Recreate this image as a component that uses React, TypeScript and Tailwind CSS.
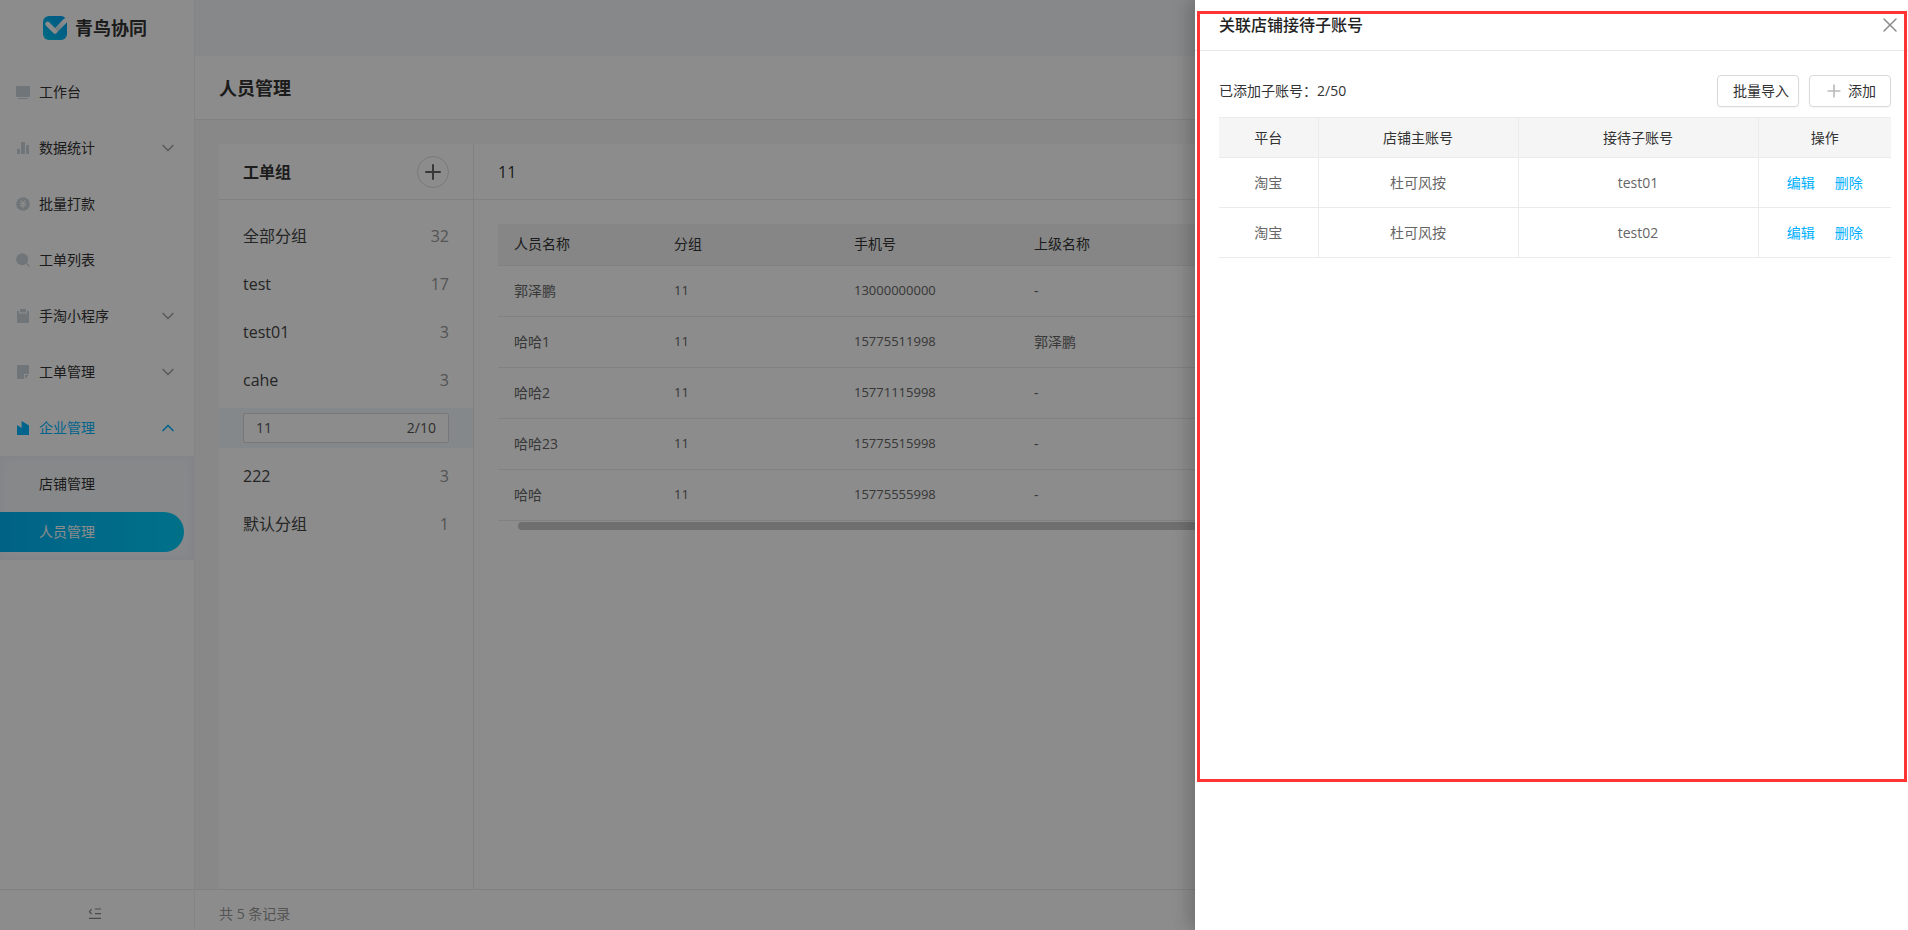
import { useState } from "react";
import clsx from "clsx";
import { ChevronDown, ChevronUp, Plus, X } from "lucide-react";

type IconProps = { name: string };

function MenuIcon({ name }: IconProps) {
    return (
        <svg viewBox="0 0 14 14" className="h-3.5 w-3.5" fill="currentColor">
            {name === "workbench" && (
                <>
                    <rect x="0" y="1" width="14" height="11" rx="1" />
                    <rect x="2" y="13" width="10" height="1" />
                </>
            )}
            {name === "stats" && (
                <>
                    <rect x="1" y="8" width="3" height="5" />
                    <rect x="5" y="1" width="4" height="12" />
                    <rect x="10" y="4" width="3" height="9" />
                </>
            )}
            {name === "pay" && (
                <>
                    <circle cx="7" cy="7" r="6.8" />
                    <path
                        d="M4.6 3.4 7 6.2l2.4-2.8M4.2 6.6h5.6M4.2 8.6h5.6M7 6.2V11"
                        fill="none"
                        stroke="#fff"
                        strokeWidth="1.1"
                    />
                </>
            )}
            {name === "search" && (
                <>
                    <circle cx="6.2" cy="6.2" r="6" />
                    <path
                        d="m10.5 10.5 3 3"
                        stroke="currentColor"
                        strokeWidth="1.2"
                    />
                </>
            )}
            {name === "clipboard" && (
                <>
                    <path d="M1 2h2v2.6h8V2h2v11.2a.8.8 0 0 1-.8.8H1.8a.8.8 0 0 1-.8-.8z" />
                    <rect x="4" y="0" width="6" height="3.4" />
                </>
            )}
            {name === "note" && (
                <>
                    <path d="M1.8 0h10.4a.8.8 0 0 1 .8.8V9H8v5H1.8a.8.8 0 0 1-.8-.8V.8A.8.8 0 0 1 1.8 0z" />
                    <path d="M9 14v-4h4z" />
                </>
            )}
            {name === "company" && (
                <path d="M1 14V4l4.6 3V0L13 4.4V14z" />
            )}
        </svg>
    );
}

const menus = [
    { label: "工作台", icon: "workbench", arrow: false },
    { label: "数据统计", icon: "stats", arrow: true },
    { label: "批量打款", icon: "pay", arrow: false },
    { label: "工单列表", icon: "search", arrow: false },
    { label: "手淘小程序", icon: "clipboard", arrow: true },
    { label: "工单管理", icon: "note", arrow: true },
];

const groups = [
    { name: "全部分组", count: 32 },
    { name: "test", count: 17 },
    { name: "test01", count: 3 },
    { name: "cahe", count: 3 },
    { name: "11", count: 5, editing: true },
    { name: "222", count: 3 },
    { name: "默认分组", count: 1 },
];

const people = [
    { name: "郭泽鹏", group: "11", phone: "13000000000", leader: "-" },
    { name: "哈哈1", group: "11", phone: "15775511998", leader: "郭泽鹏" },
    { name: "哈哈2", group: "11", phone: "15771115998", leader: "-" },
    { name: "哈哈23", group: "11", phone: "15775515998", leader: "-" },
    { name: "哈哈", group: "11", phone: "15775555998", leader: "-" },
];

const accounts = [
    { platform: "淘宝", main: "杜可风按", sub: "test01" },
    { platform: "淘宝", main: "杜可风按", sub: "test02" },
];

function Logo() {
    return (
        <svg viewBox="0 0 24 24" className="h-6 w-6">
            <defs>
                <linearGradient id="logo-bg" x1="0" y1="1" x2="1" y2="0">
                    <stop offset="0" stopColor="#00c4f0" />
                    <stop offset="1" stopColor="#00a2f2" />
                </linearGradient>
                <linearGradient
                    id="logo-arm"
                    gradientUnits="userSpaceOnUse"
                    x1="12"
                    y1="15"
                    x2="20"
                    y2="6"
                >
                    <stop offset="0" stopColor="#b9dcea" />
                    <stop offset="1" stopColor="#fff" />
                </linearGradient>
            </defs>
            <rect width="24" height="24" rx="6" fill="url(#logo-bg)" />
            <g
                fill="none"
                strokeWidth="4.6"
                strokeLinecap="round"
                strokeLinejoin="round"
            >
                <path d="M12 15.4 22.6 4.4" stroke="url(#logo-arm)" />
                <path d="M4.6 8 12 15.4" stroke="#fff" />
            </g>
        </svg>
    );
}

function Sidebar() {
    return (
        <aside className="flex w-[195px] shrink-0 flex-col border-r border-[#f0f0f0] bg-white">
            <div className="flex h-14 items-center gap-2 pl-[43px]">
                <Logo />
                <span className="text-lg font-bold text-[#333]">青鸟协同</span>
            </div>
            <nav className="flex-1 pt-2">
                {menus.map((m) => (
                    <a
                        key={m.label}
                        href="#"
                        className="flex h-14 items-center px-4 text-sm text-[#333]"
                    >
                        <span className="mr-[9px] text-[#ccd6dc]">
                            <MenuIcon name={m.icon} />
                        </span>
                        {m.label}
                        {m.arrow && (
                            <ChevronDown className="ml-auto h-5 w-5 text-[#aaa]" />
                        )}
                    </a>
                ))}
                <a
                    href="#"
                    className="flex h-14 items-center px-4 text-sm text-[#00b7ff]"
                >
                    <span className="mr-[9px]">
                        <MenuIcon name="company" />
                    </span>
                    企业管理
                    <ChevronUp className="ml-auto h-5 w-5" />
                </a>
                <div className="space-y-2 bg-[#f5f7fa] py-2 text-sm shadow-[inset_0_0_8px_rgba(0,80,140,0.06)]">
                    <a
                        href="#"
                        className="flex h-10 items-center pl-[39px] text-[#333]"
                    >
                        店铺管理
                    </a>
                    <a
                        href="#"
                        className="mr-2.5 flex h-10 items-center rounded-r-full bg-gradient-to-r from-[#00b4f5] to-[#00cdfa] pl-[39px] text-white"
                    >
                        人员管理
                    </a>
                </div>
            </nav>
            <div className="flex h-[41px] items-center justify-center border-t border-[#ebebeb] pt-2 pr-1">
                <button type="button" aria-label="收起菜单">
                    <svg
                        viewBox="0 0 14 12"
                        className="h-3 w-3.5"
                        fill="none"
                        stroke="#888"
                        strokeWidth="1.2"
                    >
                        <path d="M7 1h6M7 5.7h6M1 10.4h12M3.6 1.2 1.4 3.7l2.2 2.5" />
                    </svg>
                </button>
            </div>
        </aside>
    );
}

function GroupPanel() {
    const [groupName, setGroupName] = useState("11");

    return (
        <section className="w-[255px] shrink-0 border-r border-[#ebebeb] bg-white">
            <div className="flex h-14 items-center justify-between border-b border-[#ebebeb] px-6">
                <h2 className="text-base font-bold text-[#333]">工单组</h2>
                <button
                    type="button"
                    aria-label="新增分组"
                    className="flex h-8 w-8 items-center justify-center rounded-full border border-[#ddd] text-[#666]"
                >
                    <Plus className="h-6 w-6" strokeWidth={2} />
                </button>
            </div>
            <ul className="space-y-2 pt-4">
                {groups.map((g) => (
                    <li
                        key={g.name}
                        className={clsx(
                            "flex h-10 items-center justify-between px-6 text-base",
                            g.editing && "bg-[#f0f8fc]"
                        )}
                    >
                        {g.editing ? (
                            <label className="flex h-[30px] w-full items-center rounded-xs border border-[#d9d9d9] bg-white px-3 text-sm text-[#555]">
                                <input
                                    aria-label="分组名称"
                                    value={groupName}
                                    maxLength={10}
                                    onChange={(e) =>
                                        setGroupName(e.target.value)
                                    }
                                    className="min-w-0 flex-1 outline-none"
                                />
                                <span>{groupName.length}/10</span>
                            </label>
                        ) : (
                            <>
                                <span className="text-[#444]">{g.name}</span>
                                <span className="text-[#999]">{g.count}</span>
                            </>
                        )}
                    </li>
                ))}
            </ul>
        </section>
    );
}

function PeoplePanel() {
    return (
        <section className="min-w-0 flex-1 bg-white">
            <div className="flex h-14 items-center border-b border-[#ebebeb] px-6 text-base text-[#333]">
                11
            </div>
            <div className="px-6 pt-6">
                <table className="w-full table-fixed text-left text-sm">
                    <colgroup>
                        <col className="w-40" />
                        <col className="w-[180px]" />
                        <col className="w-[180px]" />
                        <col />
                    </colgroup>
                    <thead>
                        <tr className="h-[41px] border-b border-[#ebebeb] bg-[#f5f5f5] text-[#333]">
                            <th className="px-4 font-normal">人员名称</th>
                            <th className="px-4 font-normal">分组</th>
                            <th className="px-4 font-normal">手机号</th>
                            <th className="px-4 font-normal">上级名称</th>
                        </tr>
                    </thead>
                    <tbody>
                        {people.map((p) => (
                            <tr
                                key={p.phone}
                                className="h-[51px] border-b border-[#ebebeb] text-[#666]"
                            >
                                <td className="px-4">{p.name}</td>
                                <td className="px-4 text-[13px]">{p.group}</td>
                                <td className="px-4 text-[13px]">{p.phone}</td>
                                <td className="px-4">{p.leader}</td>
                            </tr>
                        ))}
                    </tbody>
                </table>
                <div className="mt-px ml-5 h-2 rounded-full bg-[#cacaca]" />
            </div>
        </section>
    );
}

function AccountDrawer() {
    return (
        <div
            role="dialog"
            aria-label="关联店铺接待子账号"
            className="absolute inset-y-0 right-0 w-[713px] bg-white shadow-[-6px_0_16px_rgba(0,0,0,0.2)]"
        >
            <div className="flex h-[51px] items-center justify-between border-b border-[#e8e8e8] pr-1.5 pl-6">
                <h2 className="text-base font-medium text-[#222]">
                    关联店铺接待子账号
                </h2>
                <button
                    type="button"
                    aria-label="关闭"
                    className="text-[#8c8c8c]"
                >
                    <X className="h-6 w-6" strokeWidth={1.5} />
                </button>
            </div>
            <div className="pt-6 pr-[17px] pl-6 text-sm">
                <div className="mb-2.5 flex items-center gap-2.5 text-[#333]">
                    <span className="mr-auto">已添加子账号：2/50</span>
                    <button
                        type="button"
                        className="h-8 w-[82px] rounded border border-[#d9d9d9] pl-1.5 shadow-xs"
                    >
                        批量导入
                    </button>
                    <button
                        type="button"
                        className="flex h-8 w-[82px] items-center justify-center gap-1 rounded border border-[#d9d9d9] shadow-xs"
                    >
                        <Plus className="h-5 w-5 text-[#bbb]" />
                        添加
                    </button>
                </div>
                <table className="w-full table-fixed text-center">
                    <colgroup>
                        <col className="w-[99px]" />
                        <col className="w-[200px]" />
                        <col />
                        <col className="w-[133px]" />
                    </colgroup>
                    <thead>
                        <tr className="h-10 divide-x divide-[#ebebeb] border-y border-[#ebebeb] bg-[#f5f5f5] text-[#333]">
                            <th className="font-normal">平台</th>
                            <th className="font-normal">店铺主账号</th>
                            <th className="font-normal">接待子账号</th>
                            <th className="font-normal">操作</th>
                        </tr>
                    </thead>
                    <tbody>
                        {accounts.map((a) => (
                            <tr
                                key={a.sub}
                                className="h-[50px] divide-x divide-[#ebebeb] border-b border-[#ebebeb] text-[#666]"
                            >
                                <td>{a.platform}</td>
                                <td>{a.main}</td>
                                <td>{a.sub}</td>
                                <td className="text-[#00b0ff]">
                                    <div className="flex justify-center gap-5">
                                        <a href="#">编辑</a>
                                        <a href="#">删除</a>
                                    </div>
                                </td>
                            </tr>
                        ))}
                    </tbody>
                </table>
            </div>
            <div className="pointer-events-none absolute top-[11px] right-px left-0.5 h-[771px] border-3 border-[#ff3535]" />
        </div>
    );
}

export default function App() {
    return (
        <div className="relative flex h-screen overflow-hidden bg-[#f7f7f7] font-['Open_Sans','Noto_Sans_CJK_SC',sans-serif]">
            <Sidebar />
            <main className="flex min-w-0 flex-1 flex-col">
                <div className="h-14 bg-[#f5f7fa]" />
                <header className="flex h-16 items-center border-b border-[#ebebeb] bg-white px-6">
                    <h1 className="text-lg font-bold text-[#333]">人员管理</h1>
                </header>
                <div className="flex min-h-0 flex-1 px-6 pt-6">
                    <GroupPanel />
                    <PeoplePanel />
                </div>
                <footer className="flex h-[41px] items-center border-t border-[#ebebeb] bg-white px-6 pt-2 text-sm text-[#999]">
                    共 5 条记录
                </footer>
            </main>
            <div className="absolute inset-0 bg-black/45" />
            <AccountDrawer />
        </div>
    );
}
